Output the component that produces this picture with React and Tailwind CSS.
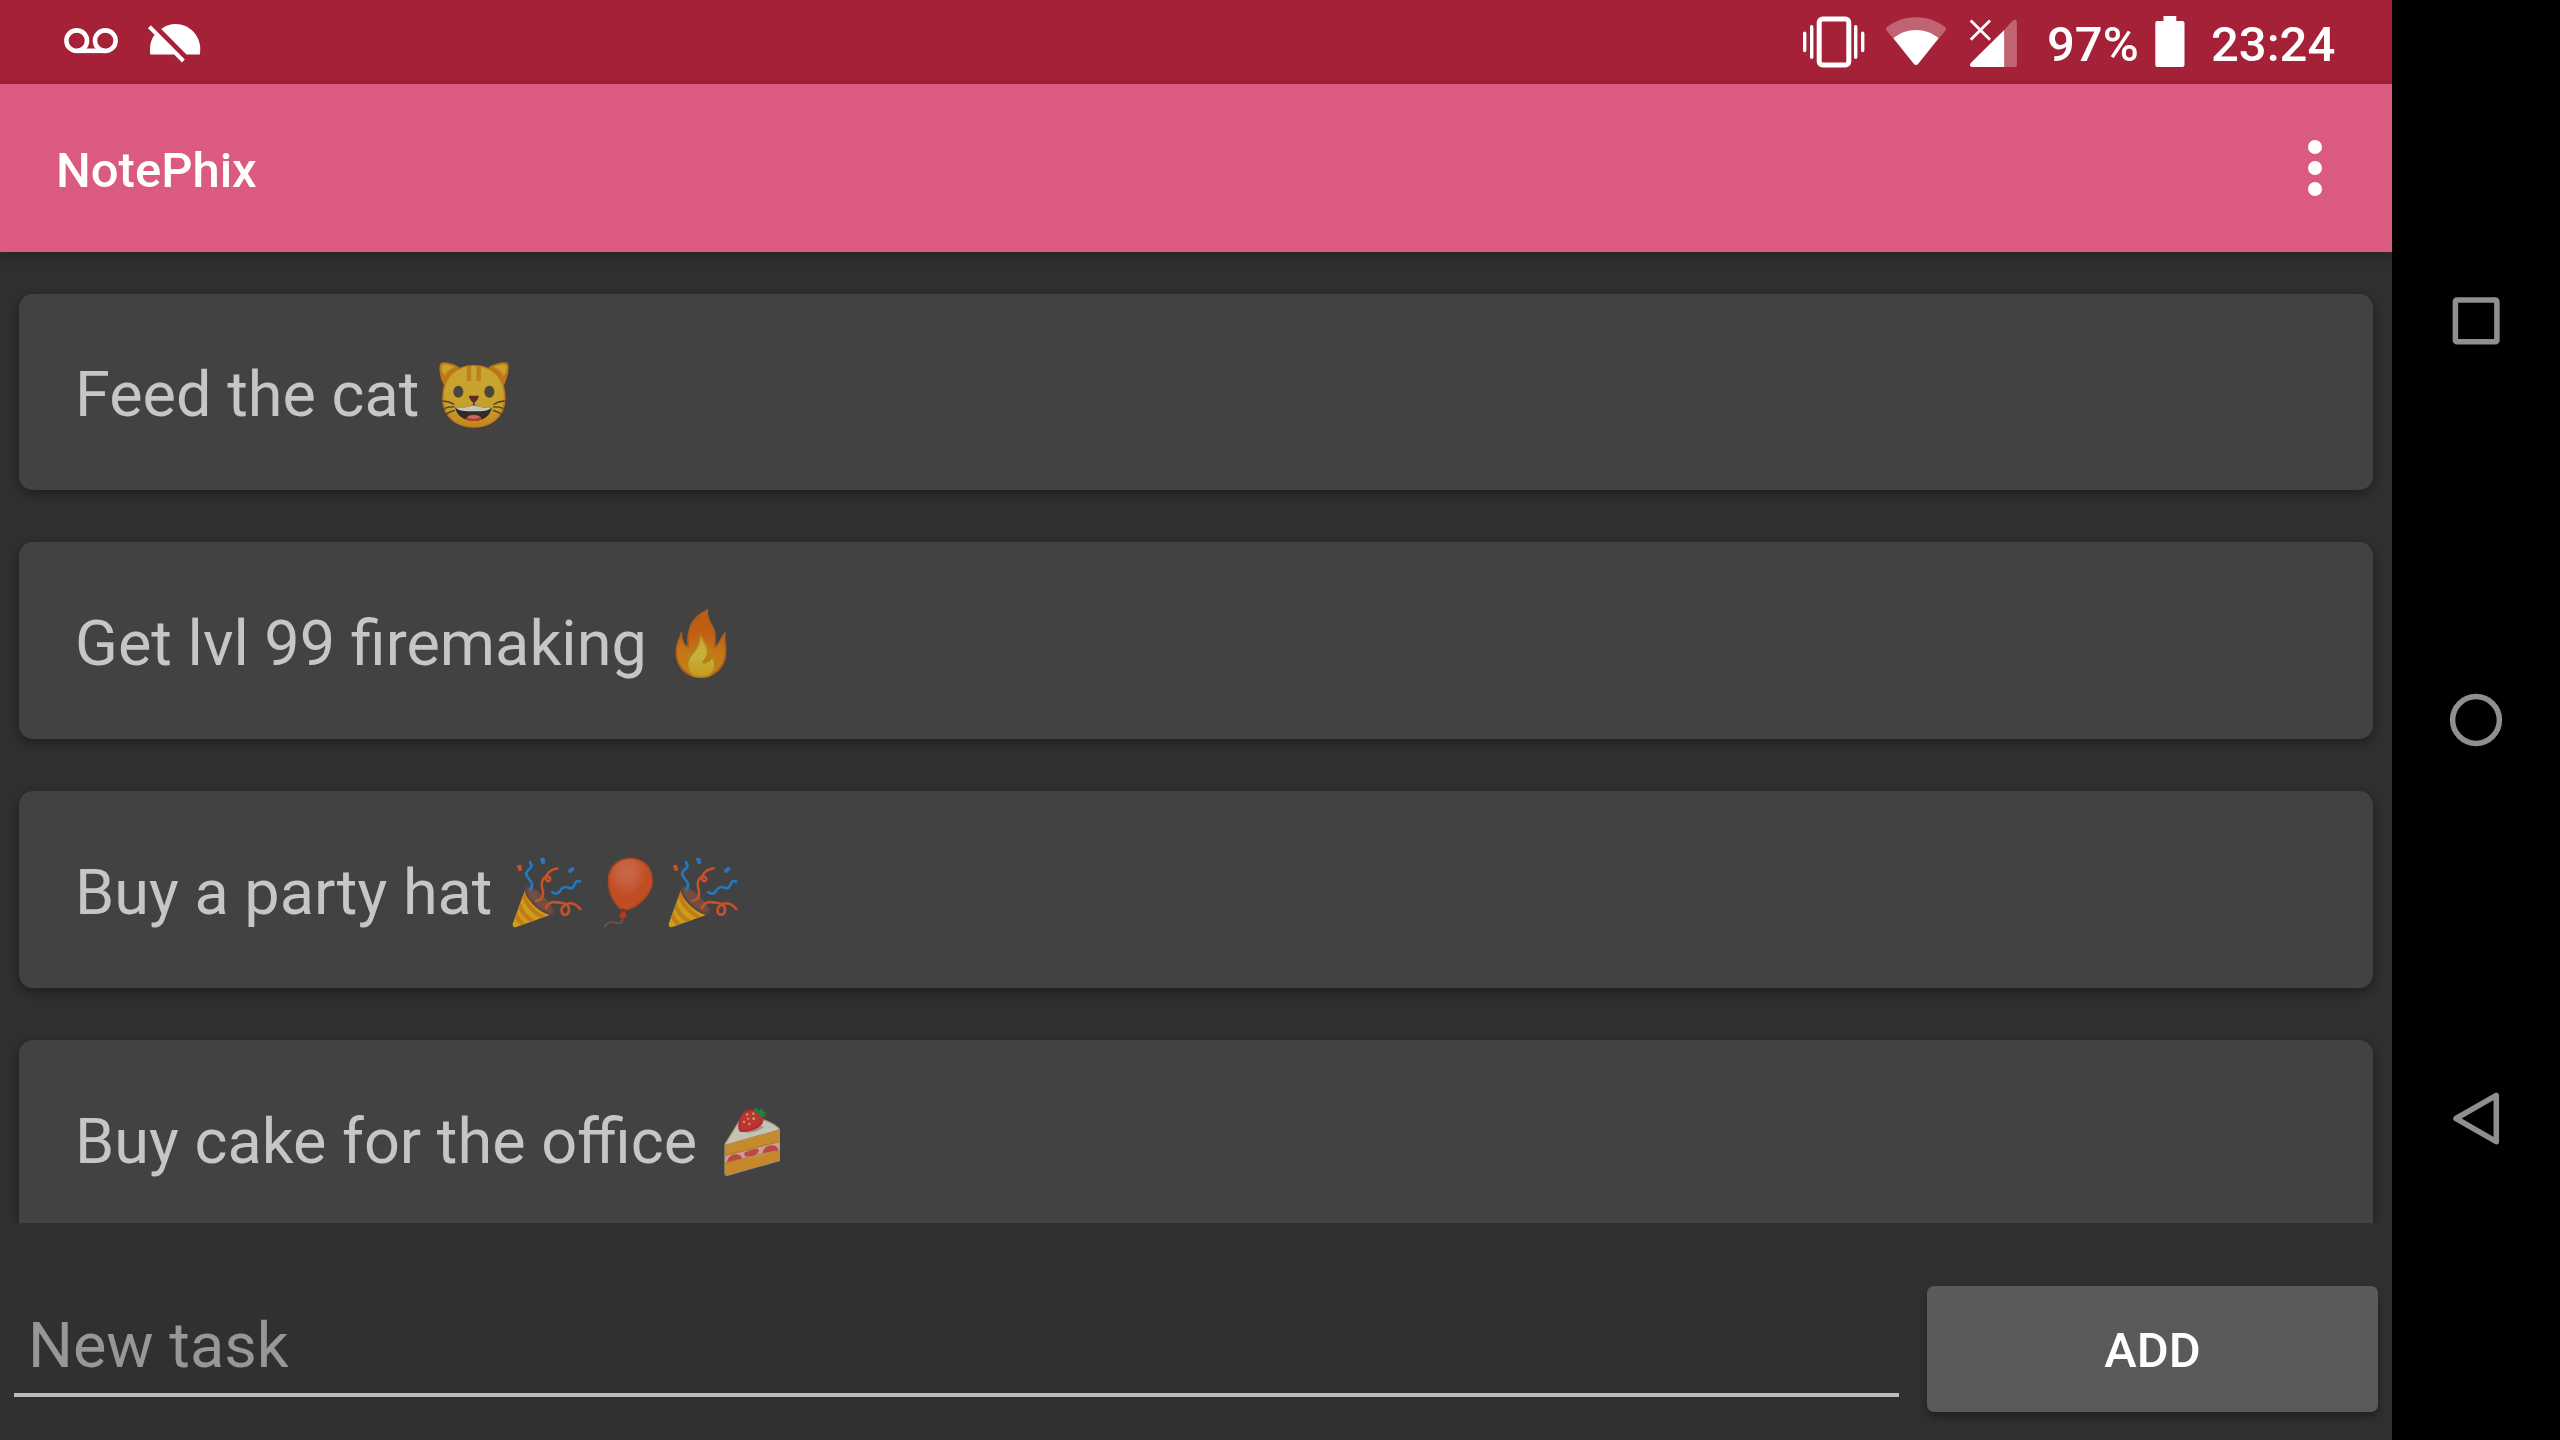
function Cat() {
  return (
    <svg className="h-[78px] w-[78px] shrink-0" viewBox="49.5 48 234 234" role="img" aria-label="😺">
      <defs>
        <linearGradient id="catFace" x1="0" y1="0" x2="0" y2="1">
          <stop offset="0" stopColor="#c9a62e" />
          <stop offset=".65" stopColor="#c7a02c" />
          <stop offset="1" stopColor="#c6841f" />
        </linearGradient>
      </defs>
      <path d="M80 142C66 118 60 92 64 75C66 67 72 66 80 67C96 69 112 74 122 82Z" fill="#bd7615" />
      <path d="M253 142C267 118 272 92 270 75C268 67 262 66 254 67C238 69 222 74 210 82Z" fill="#bd7615" />
      <path d="M73 88C70 78 74 72 82 73C92 74 104 77 111 81C97 87 86 98 79 112C76 104 74 96 73 88Z" fill="#c58a24" />
      <path d="M261 88C264 78 260 72 252 73C242 74 230 77 223 81C237 87 248 98 255 112C258 104 260 96 261 88Z" fill="#c58a24" />
      <path d="M69 85C69 77 73 73 81 74C91 75 101 78 107 81C94 84 82 94 75 106Z" fill="#c7a42d" />
      <path d="M265 85C265 77 261 73 253 74C243 75 233 78 227 81C240 84 252 94 259 106Z" fill="#c7a42d" />
      <path d="M166 75C222 75 261 112 261 174C261 230 220 263 166 263C112 263 71 230 71 174C71 112 110 75 166 75Z" fill="#bd7b1a" />
      <path d="M166 79C220 79 256 114 256 173C256 226 218 259 166 259C114 259 76 226 76 173C76 114 112 79 166 79Z" fill="url(#catFace)" />
      <path d="M145 80Q151 78 158 79V122Q152 126 145 122ZM174 79Q181 78 187 80V122Q180 126 174 122Z" fill="#bd7f20" />
      <ellipse cx="119.500" cy="155.500" rx="15" ry="18" fill="#49463a" />
      <ellipse cx="212.500" cy="155.500" rx="15" ry="18" fill="#49463a" />
      <path d="M110 203C128 207 151 202 166 193C181 202 204 207 220 203C214 229 194 242 166 242C138 242 116 229 110 203Z" fill="#302a26" />
      <path d="M112 203C130 206 151 201 166 194C181 201 202 206 218 203C213 212 193 214 166 214C139 214 118 212 112 203Z" fill="#c6c5be" />
      <path d="M142 239C142 230 151 224 166 224C181 224 190 230 190 239C177 244 155 244 142 239Z" fill="#b63e23" />
      <ellipse cx="166" cy="231" rx="17" ry="5" fill="#c47069" />
      <path d="M166 186V197" stroke="#49311f" strokeWidth="4" />
      <path d="M152 167H180C183 172 172 187 166 188C160 187 149 172 152 167Z" fill="#5a2b29" />
      <path d="M75 183C86 184 96 187 107 193M79 205C90 201 99 200 108 201M84 222C92 216 100 213 109 211M257 183C246 184 236 187 225 193M253 205C242 201 233 200 224 201M248 222C240 216 232 213 223 211" fill="none" stroke="#494027" strokeWidth="4" />
      <path d="M60 181L76 183M65 212L80 205M67 234L84 222M272 181L256 183M267 212L252 205M265 234L248 222" fill="none" stroke="#393939" strokeWidth="3" opacity=".55" />
    </svg>
  );
}

function Fire() {
  return (
    <svg className="h-[78px] w-[78px] shrink-0" viewBox="34.5 45 234 234" role="img" aria-label="🔥">
      <defs>
        <linearGradient id="fireOuter" x1="0" y1="0" x2="0" y2="1">
          <stop offset="0" stopColor="#bd5a12" />
          <stop offset=".35" stopColor="#c16014" />
          <stop offset=".65" stopColor="#c57817" />
          <stop offset="1" stopColor="#c47c16" />
        </linearGradient>
        <linearGradient id="fireInner" x1="0" y1="0" x2="0" y2="1">
          <stop offset="0" stopColor="#c4a43a" />
          <stop offset=".5" stopColor="#c5b23e" />
          <stop offset="1" stopColor="#c79a1c" />
        </linearGradient>
      </defs>
      <path d="M173 57C170 80 179 92 188 109C196 124 198 146 195 168C205 160 214 132 227 123C221 145 228 158 228 184C228 230 197 264 151 264C106 264 75 231 75 186C75 158 87 145 92 123C99 134 92 155 111 168C106 112 127 76 173 57Z" fill="#ad5e1b" />
      <path d="M168 65C168 85 176 98 183 112C191 129 192 150 189 177C203 171 210 157 220 138C217 155 223 166 223 184C223 226 194 258 151 258C109 258 80 228 80 186C80 164 86 153 91 140C95 158 100 169 117 176C111 117 127 85 168 65Z" fill="url(#fireOuter)" />
      <path d="M149 126C151 143 179 162 174 194C171 207 161 212 158 218C169 219 180 207 181 193C200 211 202 246 174 261Q151 266 128 260C103 245 103 211 119 194C136 177 147 158 149 126Z" fill="#b08619" />
      <path d="M151 138C155 158 173 169 168 193C164 208 155 211 155 218C166 226 179 216 185 205C196 226 190 247 172 256Q151 261 132 256C109 243 109 214 124 197C141 178 150 162 151 138Z" fill="url(#fireInner)" />
    </svg>
  );
}

function Popper() {
  return (
    <svg className="h-[78px] w-[78px] shrink-0" viewBox="31 42 234 234" role="img" aria-label="🎉">
      <defs>
        <clipPath id="cone">
          <path d="M84 145C92 180 117 211 157 225L56 261Q44 264 45 251Z" />
        </clipPath>
      </defs>
      <path d="M84 145C92 180 117 211 157 225L56 261Q44 264 45 251Z" fill="#c99f17" />
      <g clipPath="url(#cone)" fill="none" stroke="#c47a1c" strokeWidth="12">
        <path d="M74 153C84 194 110 223 153 239" />
        <path d="M62 184C69 215 91 239 119 250" />
        <path d="M51 214C57 239 69 251 88 262" />
      </g>
      <path d="M84 141C93 132 120 148 142 172C164 194 175 214 168 221C158 231 128 217 105 193C84 170 76 149 84 141Z" fill="#62453c" />
      <path d="M91 147C99 140 119 152 138 172C156 190 167 207 162 214C153 222 130 208 110 187C92 169 84 154 91 147Z" fill="#704e42" />
      <path d="M57 76L70 74L74 91L63 93ZM127 55L139 53L143 69L133 73ZM210 91L225 80L231 88L217 100Z" fill="#c8512a" />
      <path d="M127 55L139 53L143 69L133 73ZM210 91L225 80L231 88L217 100Z" fill="#2478c0" />
      <g fill="none" strokeWidth="8">
        <path d="M95 64C108 78 99 84 90 92C76 108 102 119 103 133C104 144 101 147 95 151" stroke="#2478c0" />
        <path d="M161 154C171 164 181 163 187 153C194 139 206 140 213 143C226 148 228 139 231 132C235 121 243 122 250 126" stroke="#2478c0" />
        <path d="M183 85C157 88 142 103 146 119C150 129 161 122 156 112C147 101 129 117 133 142C139 160 139 183 112 183" stroke="#c8512a" strokeWidth="7.500" />
        <path d="M144 207C153 177 178 187 201 191C218 196 217 220 205 224C190 226 187 205 200 196C217 184 236 190 250 210" stroke="#c8512a" />
      </g>
    </svg>
  );
}

function Balloon() {
  return (
    <svg className="h-[78px] w-[78px] shrink-0" viewBox="265 42 234 234" role="img" aria-label="🎈">
      <defs>
        <radialGradient id="shine" cx=".42" cy=".25" r=".48">
          <stop offset="0" stopColor="#c8694b" />
          <stop offset=".5" stopColor="#c65f3e" />
          <stop offset="1" stopColor="#c04d24" />
        </radialGradient>
      </defs>
      <path d="M375 232C377 249 367 252 352 248C334 242 329 251 320 261" fill="none" stroke="#72534a" strokeWidth="5" />
      <path d="M398 53C438 53 466 82 466 122C466 164 419 208 378 213C354 202 330 167 330 122C330 82 358 53 398 53Z" fill="#ad4624" />
      <path d="M398 58C435 58 461 84 461 121C461 161 417 203 379 208C356 197 335 164 335 122C335 84 361 58 398 58Z" fill="url(#shine)" />
      <path d="M370 207Q378 203 385 209L383 216L388 231Q375 236 363 231L371 215Z" fill="#b83b1d" />
      <path d="M370 207Q378 204 385 209L382 216H371Z" fill="#8e2f18" />
    </svg>
  );
}

function Cake() {
  return (
    <svg className="h-[78px] w-[78px] shrink-0" viewBox="42 39 234 234" role="img" aria-label="🍰">
      <path d="M76 162L128 78C172 78 222 91 243 117V213L85 258Q76 259 76 249Z" fill="#9b9078" />
      <path d="M80 161L130 82C171 82 219 94 240 118L81 163Z" fill="#c4c3b4" />
      <path d="M79 164L242 120V158L79 202Z" fill="#c48a2c" />
      <path d="M79 199L242 155V186L79 221Z" fill="#c8a298" />
      <path d="M84 219C84 188 127 185 130 207ZM136 195C136 203 173 202 180 182C176 172 164 176 136 188ZM191 190C193 160 235 158 239 181Z" fill="#bd4643" />
      <path d="M79 219L242 183V211L87 254Q79 256 79 248Z" fill="#c6882a" />
      <path d="M77 196L132 183L180 170L242 155M79 219L130 206L190 191L242 183" fill="none" stroke="#b87829" strokeWidth="3" />
      <path d="M120 124C147 133 176 127 194 112L190 107L122 119Z" fill="#91836f" opacity=".7" />
      <path d="M118 116C116 88 126 62 151 59C176 56 193 73 193 91C193 111 157 128 126 126Q119 125 118 116Z" fill="#b42c2f" />
      <path d="M124 113C124 88 133 66 153 64C172 63 186 76 186 89C183 105 155 121 131 120Z" fill="#bd3435" />
      <path d="M165 58L171 53L179 60L187 56L193 64L204 67L197 72L202 80L191 79L187 87L180 73L166 67Z" fill="#267e3c" />
      <g fill="#c9a65e">
        <circle cx="144" cy="73" r="3.500" />
        <circle cx="163" cy="71" r="3.500" />
        <circle cx="147" cy="86" r="3" />
        <circle cx="164" cy="86" r="4" />
        <circle cx="135" cy="96" r="3.500" />
        <circle cx="151" cy="102" r="3.500" />
      </g>
    </svg>
  );
}

const tasks = [
  { text: "Feed the cat ", icons: [Cat] },
  { text: "Get lvl 99 firemaking ", icons: [Fire] },
  { text: "Buy a party hat ", icons: [Popper, Balloon, Popper] },
  { text: "Buy cake for the office ", icons: [Cake] },
];

function StatusBar() {
  return (
    <div className="flex h-[84px] shrink-0 items-center bg-[#a52138] text-[49px] font-medium text-white">
      <svg className="ml-[60px] h-[84px] w-[150px]" viewBox="60 0 150 84" fill="none">
        <circle cx="76.7" cy="40.7" r="10.3" stroke="#fff" strokeWidth="4.6" />
        <circle cx="105.3" cy="40.7" r="10.3" stroke="#fff" strokeWidth="4.6" />
        <path d="M76.7 50.8H105.3" stroke="#fff" strokeWidth="4.6" />
        <path d="M161.2 28.9C165.500 25.400 170.500 24 175.500 24C189.500 24 200.300 35.500 200.300 49.500L199.800 54.500H186.500Z" fill="#fff" />
        <path d="M150.300 54.500C149.300 47.500 150.500 40 154.600 34.700L148 28.200L150.800 25.300L184.800 59.500L182 62.500L174.200 54.500Z" fill="#fff" />
      </svg>
      <div className="flex-1" />
      <svg className="h-[84px] w-[240px]" viewBox="1800 0 240 84" fill="none">
        <rect x="1819.200" y="18.900" width="29.600" height="46.200" rx="3.500" stroke="#fff" strokeWidth="5" />
        <path d="M1804.700 33.300V50.500M1811.700 26.700V57.300M1855.700 26.700V57.300M1862.700 33.300V50.500" stroke="#fff" strokeWidth="3.400" strokeLinecap="round" />
        <path d="M1887 31Q1885 28.500 1887.500 26.500C1904 14 1928 14 1944.500 26.500Q1947 28.500 1945 31L1918 64Q1916 66 1914 64Z" fill="#fff" fillOpacity=".3" />
        <path d="M1893.500 38.300C1906 27.300 1926 27.300 1938.500 38.300L1918 64Q1916 66 1914 64Z" fill="#fff" />
        <path d="M2004.200 30L2012.500 20.700Q2016.900 18 2016.900 22.500V65Q2016.900 67 2015 67H2004.200Z" fill="#fff" fillOpacity=".3" />
        <path d="M2004.200 30V67H1972Q1968.500 66 1970.800 63Z" fill="#fff" />
        <path d="M1970.700 20.500L1990 39.700M1990 20.500L1970.700 39.700" stroke="#fff" strokeWidth="2.800" />
      </svg>
      <span className="ml-[7px] w-[108px] pt-[4px] leading-none">97%</span>
      <svg className="h-[84px] w-[30px]" viewBox="2154.500 0 30 84">
        <path d="M2163 16H2175.800V21H2182Q2184 21 2184 23V65Q2184 67 2182 67H2156.800Q2154.800 67 2154.800 65V23Q2154.800 21 2156.800 21H2163Z" fill="#fff" />
      </svg>
      <span className="ml-[26px] w-[181px] pt-[4px] leading-none">23:24</span>
    </div>
  );
}

function AppBar() {
  return (
    <header className="relative z-10 flex h-[168px] shrink-0 items-center justify-between bg-[#db5a7f] pl-[56px] pr-[70px] shadow-[0_4px_14px_rgba(0,0,0,0.3)]">
      <h1 className="pt-[4px] text-[49px] font-medium leading-none text-white">NotePhix</h1>
      <div className="flex flex-col gap-[7px]">
        <span className="size-[14px] rounded-full bg-white" />
        <span className="size-[14px] rounded-full bg-white" />
        <span className="size-[14px] rounded-full bg-white" />
      </div>
    </header>
  );
}

function NavBar() {
  return (
    <nav className="flex w-[168px] shrink-0 flex-col items-center bg-black">
      <svg className="h-[1440px] w-[168px]" viewBox="2392 0 168 1440" fill="none" stroke="#8f8f8f" strokeWidth="5.500" strokeLinejoin="round">
        <rect x="2455.400" y="300" width="41.500" height="41.700" rx="1.500" />
        <circle cx="2476" cy="720" r="23.400" />
        <path d="M2456 1118.500L2496.300 1095.300V1141.700Z" />
      </svg>
    </nav>
  );
}

export default function App() {
  return (
    <div className="flex h-[1440px] w-[2560px] overflow-hidden bg-[#303030] font-[Roboto,sans-serif]">
      <main className="flex w-[2392px] flex-col">
        <StatusBar />
        <AppBar />
        <section className="flex h-[971px] shrink-0 flex-col gap-[52px] overflow-hidden px-[19px] pt-[42px]">
          {tasks.map(({ text, icons }) => (
            <article
              key={text}
              className="flex h-[197px] shrink-0 items-start rounded-[14px] bg-[#424242] pl-[56px] pt-[63px] shadow-[0_4px_14px_rgba(0,0,0,0.4)] first:h-[196px] first:pt-[62px]"
            >
              <span className="whitespace-pre pt-[2px] text-[63px] leading-[74px] text-[#c6c6c6]">{text}</span>
              {icons.map((Icon, i) => (
                <Icon key={i} />
              ))}
            </article>
          ))}
        </section>
        <footer className="flex flex-1 items-start gap-[28px] pl-[14px] pr-[14px] pt-[63px]">
          <div className="flex h-[111px] w-[1885px] items-end border-b-4 border-[#bdbdbd] pb-[10px] pl-[14px] text-[63px] leading-[74px] text-[#979797]">New task</div>
          <button className="h-[126px] w-[451px] rounded-[7px] bg-[#5a5a5c] pt-[4px] text-[49px] font-medium text-white shadow-[0_5px_10px_rgba(0,0,0,0.35)]">ADD</button>
        </footer>
      </main>
      <NavBar />
    </div>
  );
}
